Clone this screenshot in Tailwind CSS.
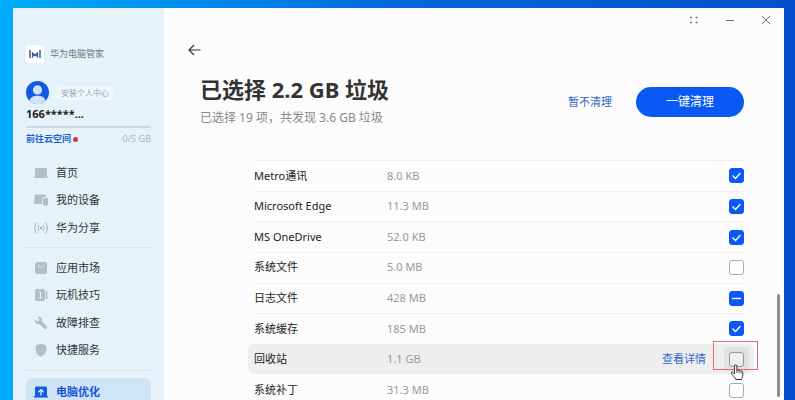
<!DOCTYPE html>
<html lang="zh-CN">
<head>
  <meta charset="UTF-8">
  <title>华为电脑管家</title>
  <script src="https://cdn.jsdelivr.net/npm/@tailwindcss/browser@4"></script>
</head>
<body class="h-screen overflow-hidden bg-linear-to-r from-[#00adfc] via-[#0668d8] to-[#0450cc] pt-2 pl-[13px] pr-[11px] font-['Noto_Sans','Noto_Sans_CJK_SC',sans-serif] text-[11px] text-[#333]">
  <div class="flex h-full overflow-hidden bg-[#fcfcfc]">

    <!-- Sidebar -->
    <aside class="flex w-[151px] shrink-0 flex-col bg-[#e5f2f9] px-[13px] pt-[37px]">
      <div class="flex h-[18px] shrink-0 items-center gap-[6px]">
        <svg class="size-[18px] rounded bg-white" viewBox="0 0 18 18" fill="none" stroke="#2d4a92" stroke-width="1.4">
          <path d="M4 5v8M14 5v8M6.6 12.6V8.4L9 10.6l2.4-2.2v4.2" />
        </svg>
        <span class="text-[9px] text-[#6c7984]">华为电脑管家</span>
      </div>

      <div class="mt-[18px] flex h-[23px] shrink-0 items-center gap-[6px]">
        <svg class="size-[23px]" viewBox="0 0 24 24">
          <clipPath id="avatar"><circle cx="12" cy="12" r="12" /></clipPath>
          <g clip-path="url(#avatar)">
            <rect width="24" height="24" fill="#1259e8" />
            <circle cx="12" cy="9.3" r="4.8" fill="#d3e2f8" />
            <path d="M3 24c0-6 3.500-8.500 9-8.500s9 2.500 9 8.500z" fill="#d3e2f8" />
          </g>
        </svg>
        <button class="h-[14px] rounded-full bg-[#eff6fa] px-[6px] text-[8px] leading-[14px] text-[#98a2aa]">安装个人中心</button>
      </div>
      <div class="mt-[2px] h-4 text-[11px] leading-4 font-bold text-[#222]">166*****...</div>
      <div class="mt-1 h-[2px] shrink-0 rounded-full bg-[#cbd7df]"></div>
      <div class="mt-[3px] flex h-4 shrink-0 items-center text-[9px]">
        <a href="#" class="font-bold text-[#1e5fd8]">前往云空间</a>
        <span class="ml-[2px] size-[5px] rounded-full bg-[#dc3038]"></span>
        <span class="ml-auto text-[#abb6be]">0/5 GB</span>
      </div>

      <nav class="flex flex-col">
        <div class="mt-3 grid h-[83px] grid-rows-3">
          <a href="#" class="flex items-center gap-2 pl-2">
            <svg class="size-[14px]" viewBox="0 0 14 14" fill="#b3bfc6">
              <rect x="1" y="2" width="12" height="9" rx="1.500" />
              <path d="M0 10.500h14v.8a.8.8 0 0 1-.8.8H.8a.8.8 0 0 1-.8-.8z" />
            </svg>
            首页
          </a>
          <a href="#" class="flex items-center gap-2 pl-2">
            <svg class="size-[14px]" viewBox="0 0 14 14" fill="#b3bfc6">
              <path d="M1.300 1.500h9.400A1.300 1.300 0 0 1 12 2.800V4H9.800A1.600 1.600 0 0 0 8.200 5.600V11H0V9.800h.4V2.500z" />
              <rect x="9" y="5" width="5" height="7.500" rx="1" />
            </svg>
            我的设备
          </a>
          <a href="#" class="flex items-center gap-2 pl-2">
            <svg class="size-[14px]" viewBox="0 0 14 14" fill="none" stroke="#a4b1b9" stroke-linecap="round">
              <circle cx="7" cy="7" r="1.200" fill="#a4b1b9" stroke="none" />
              <path d="M4.900 4.300a3.800 3.800 0 0 0 0 5.400M9.100 4.300a3.800 3.800 0 0 1 0 5.400M2.400 2.300a6.500 6.500 0 0 0 0 9.400M11.600 2.300a6.500 6.500 0 0 1 0 9.400" />
            </svg>
            华为分享
          </a>
        </div>
        <hr class="mt-[5px] border-[#d5e2ea]">
        <div class="mt-[6px] grid h-[110px] grid-rows-4">
          <a href="#" class="flex items-center gap-2 pl-2">
            <svg class="size-[14px]" viewBox="0 0 14 14">
              <rect x="1" y="1" width="12" height="12" rx="2.500" fill="#b3bfc6" />
              <path d="M4.200 4.200a2.900 2.900 0 0 0 5.600 0" fill="none" stroke="#e5f2f9" stroke-linecap="round" />
            </svg>
            应用市场
          </a>
          <a href="#" class="flex items-center gap-2 pl-2">
            <svg class="size-[14px]" viewBox="0 0 14 14" fill="#b3bfc6">
              <rect x="1" y="1" width="10" height="12" rx="2" />
              <path d="M11.800 2.500c1 .2 1.600.8 1.600 1.800v5.400c0 1-.6 1.600-1.600 1.800z" />
              <path d="M5 4h1.500v6M4.800 10h3.400" fill="none" stroke="#e5f2f9" />
            </svg>
            玩机技巧
          </a>
          <a href="#" class="flex items-center gap-2 pl-2">
            <svg class="size-[14px]" viewBox="0 0 14 14" fill="#b3bfc6">
              <path d="M3.200.9 5.300 3 4.900 4.900 3 5.300.9 3.200a3.700 3.700 0 0 0 4.700 4.800l4.600 4.600a1.650 1.650 0 0 0 2.400-2.400L8 5.600A3.700 3.700 0 0 0 3.200.9z" />
            </svg>
            故障排查
          </a>
          <a href="#" class="flex items-center gap-2 pl-2">
            <svg class="size-[14px]" viewBox="0 0 14 14" fill="#b3bfc6">
              <path d="M7 .5 12.300 2.400v4.300c0 3.300-2.200 5.500-5.300 6.900-3.100-1.400-5.300-3.600-5.300-6.900V2.400z" />
            </svg>
            快捷服务
          </a>
        </div>
        <hr class="mt-[6px] border-[#d5e2ea]">
        <a href="#" class="mt-[7px] flex h-7 items-center gap-2 rounded-md bg-[#d0e4f8] pl-2 font-bold text-[#1656dc]">
          <svg class="size-[14px]" viewBox="0 0 14 14">
            <rect x="1" y="1.500" width="12" height="10" rx="1.500" fill="#1259e8" />
            <path d="M0 11h14v1.500H0z" fill="#1259e8" />
            <path d="M7 10.500V5M4.300 7.300 7 4.600l2.700 2.700" fill="none" stroke="#e5f2f9" stroke-width="1.300" />
          </svg>
          电脑优化
        </a>
      </nav>
    </aside>

    <!-- Main panel -->
    <main class="relative min-w-0 flex-1">
      <div class="flex h-6 items-center justify-end gap-6 pr-3 text-[#777]">
        <button aria-label="菜单">
          <svg class="size-3" viewBox="0 0 12 12" fill="currentColor">
            <circle cx="3" cy="3.500" r="1" /><circle cx="8.500" cy="3.500" r="1" />
            <circle cx="3" cy="8.500" r="1" /><circle cx="8.500" cy="8.500" r="1" />
          </svg>
        </button>
        <button aria-label="最小化">
          <svg class="size-3" viewBox="0 0 12 12" stroke="currentColor"><path d="M2 6.500h8" /></svg>
        </button>
        <button aria-label="关闭">
          <svg class="size-3" viewBox="0 0 12 12" stroke="currentColor"><path d="m2 2 8 8M10 2l-8 8" /></svg>
        </button>
      </div>

      <div class="mt-3 flex h-3 pl-6">
        <button aria-label="返回">
          <svg class="h-3 w-[13px]" viewBox="0 0 13 12" fill="none" stroke="#333" stroke-width="1.200"><path d="M12.500 6H1M6 1 1 6l5 5" /></svg>
        </button>
      </div>

      <div class="mt-4 flex items-center justify-between pr-10 pl-9">
        <div class="h-[60px]">
          <h1 class="text-[22px] leading-[34px] font-bold">已选择 2.2 GB 垃圾</h1>
          <p class="text-[12px] leading-6 text-[#888]">已选择 19 项，共发现 3.6 GB 垃圾</p>
        </div>
        <div class="flex items-center gap-6">
          <button class="text-[11px] text-[#3868c4]">暂不清理</button>
          <button class="h-[30px] w-[108px] rounded-full bg-[#0a59f7] text-[12px] text-white">一键清理</button>
        </div>
      </div>

      <div class="mt-7 pr-[30px] pl-[84px]">
        <table class="h-[245px] w-full table-fixed border-separate border-spacing-0">
          <colgroup>
            <col class="w-[6px]">
            <col class="w-[133px]">
            <col class="w-[140px]">
            <col>
            <col class="w-[15px]">
            <col class="w-[10px]">
          </colgroup>
          <tbody>
            <tr>
              <td class="p-0"></td>
              <td class="border-t border-[#f0f0f0] p-0 text-[#222]"><label for="metro">Metro通讯</label></td>
              <td class="border-t border-[#f0f0f0] p-0 text-[#999]">8.0 KB</td>
              <td class="border-t border-[#f0f0f0] p-0"></td>
              <td class="border-t border-[#f0f0f0] p-0">
                <div class="grid size-[15px]">
                  <input id="metro" type="checkbox" checked class="peer col-start-1 row-start-1 size-[15px] appearance-none rounded-[3px] border border-[#aaa] bg-white checked:border-[#0a59f7] checked:bg-[#0a59f7]">
                  <svg class="pointer-events-none col-start-1 row-start-1 hidden size-[15px] peer-checked:block" viewBox="0 0 15 15" fill="none" stroke="#fff" stroke-width="1.300"><path d="m3.500 7.500 3 3 5-5.500" /></svg>
                </div>
              </td>
              <td class="p-0"></td>
            </tr>
            <tr>
              <td class="p-0"></td>
              <td class="border-t border-[#f0f0f0] p-0 text-[#222]"><label for="edge">Microsoft Edge</label></td>
              <td class="border-t border-[#f0f0f0] p-0 text-[#999]">11.3 MB</td>
              <td class="border-t border-[#f0f0f0] p-0"></td>
              <td class="border-t border-[#f0f0f0] p-0">
                <div class="grid size-[15px]">
                  <input id="edge" type="checkbox" checked class="peer col-start-1 row-start-1 size-[15px] appearance-none rounded-[3px] border border-[#aaa] bg-white checked:border-[#0a59f7] checked:bg-[#0a59f7]">
                  <svg class="pointer-events-none col-start-1 row-start-1 hidden size-[15px] peer-checked:block" viewBox="0 0 15 15" fill="none" stroke="#fff" stroke-width="1.300"><path d="m3.500 7.500 3 3 5-5.500" /></svg>
                </div>
              </td>
              <td class="p-0"></td>
            </tr>
            <tr>
              <td class="p-0"></td>
              <td class="border-t border-[#f0f0f0] p-0 text-[#222]"><label for="onedrive">MS OneDrive</label></td>
              <td class="border-t border-[#f0f0f0] p-0 text-[#999]">52.0 KB</td>
              <td class="border-t border-[#f0f0f0] p-0"></td>
              <td class="border-t border-[#f0f0f0] p-0">
                <div class="grid size-[15px]">
                  <input id="onedrive" type="checkbox" checked class="peer col-start-1 row-start-1 size-[15px] appearance-none rounded-[3px] border border-[#aaa] bg-white checked:border-[#0a59f7] checked:bg-[#0a59f7]">
                  <svg class="pointer-events-none col-start-1 row-start-1 hidden size-[15px] peer-checked:block" viewBox="0 0 15 15" fill="none" stroke="#fff" stroke-width="1.300"><path d="m3.500 7.500 3 3 5-5.500" /></svg>
                </div>
              </td>
              <td class="p-0"></td>
            </tr>
            <tr>
              <td class="p-0"></td>
              <td class="border-t border-[#f0f0f0] p-0 text-[#222]"><label for="sysfile">系统文件</label></td>
              <td class="border-t border-[#f0f0f0] p-0 text-[#999]">5.0 MB</td>
              <td class="border-t border-[#f0f0f0] p-0"></td>
              <td class="border-t border-[#f0f0f0] p-0">
                <div class="grid size-[15px]">
                  <input id="sysfile" type="checkbox" class="peer col-start-1 row-start-1 size-[15px] appearance-none rounded-[3px] border border-[#aaa] bg-white checked:border-[#0a59f7] checked:bg-[#0a59f7]">
                  <svg class="pointer-events-none col-start-1 row-start-1 hidden size-[15px] peer-checked:block" viewBox="0 0 15 15" fill="none" stroke="#fff" stroke-width="1.300"><path d="m3.500 7.500 3 3 5-5.500" /></svg>
                </div>
              </td>
              <td class="p-0"></td>
            </tr>
            <tr>
              <td class="p-0"></td>
              <td class="border-t border-[#f0f0f0] p-0 text-[#222]"><label for="logs">日志文件</label></td>
              <td class="border-t border-[#f0f0f0] p-0 text-[#999]">428 MB</td>
              <td class="border-t border-[#f0f0f0] p-0"></td>
              <td class="border-t border-[#f0f0f0] p-0">
                <div class="grid size-[15px]">
                  <input id="logs" type="checkbox" class="peer col-start-1 row-start-1 size-[15px] appearance-none rounded-[3px] border border-[#aaa] bg-white indeterminate:border-[#0a59f7] indeterminate:bg-[#0a59f7]">
                  <svg class="pointer-events-none col-start-1 row-start-1 hidden size-[15px] peer-indeterminate:block" viewBox="0 0 15 15" stroke="#fff" stroke-width="1.400"><path d="M3 7.500h9" /></svg>
                </div>
              </td>
              <td class="p-0"></td>
            </tr>
            <tr>
              <td class="p-0"></td>
              <td class="border-t border-[#f0f0f0] p-0 text-[#222]"><label for="cache">系统缓存</label></td>
              <td class="border-t border-[#f0f0f0] p-0 text-[#999]">185 MB</td>
              <td class="border-t border-[#f0f0f0] p-0"></td>
              <td class="border-t border-[#f0f0f0] p-0">
                <div class="grid size-[15px]">
                  <input id="cache" type="checkbox" checked class="peer col-start-1 row-start-1 size-[15px] appearance-none rounded-[3px] border border-[#aaa] bg-white checked:border-[#0a59f7] checked:bg-[#0a59f7]">
                  <svg class="pointer-events-none col-start-1 row-start-1 hidden size-[15px] peer-checked:block" viewBox="0 0 15 15" fill="none" stroke="#fff" stroke-width="1.300"><path d="m3.500 7.500 3 3 5-5.500" /></svg>
                </div>
              </td>
              <td class="p-0"></td>
            </tr>
            <!-- hovered row -->
            <tr>
              <td class="rounded-l-md bg-[#eeeeee] p-0"></td>
              <td class="border-t border-[#eeeeee] bg-[#eeeeee] p-0 text-[#222]"><label for="recycle">回收站</label></td>
              <td class="border-t border-[#eeeeee] bg-[#eeeeee] p-0 text-[#999]">1.1 GB</td>
              <td class="border-t border-[#eeeeee] bg-[#eeeeee] p-0 pr-[23px] text-right"><a href="#" class="text-[#2f66cc]">查看详情</a></td>
              <td class="border-t border-[#eeeeee] bg-[#eeeeee] p-0">
                <div class="relative size-[15px]">
                  <div class="absolute -inset-[5px] rounded bg-[#e2e2e2]"></div>
                  <input id="recycle" type="checkbox" class="relative block size-[15px] appearance-none rounded-[3px] border border-[#999] bg-[#eee]">
                  <!-- callout and hand pointer -->
                  <div class="absolute -top-[11px] -left-4 z-10 h-[29px] w-[45px] border border-[#e06c6c]"></div>
                  <svg class="absolute top-[12px] left-px z-10 h-4 w-[14px]" viewBox="0 0 14 16" fill="#fff" stroke="#333" stroke-linejoin="round">
                    <path d="M4.500 10V2a1.200 1.200 0 0 1 2.400 0v4.500c.3-.9 2-.8 2.100.3.500-.7 1.900-.5 2 .6.600-.5 1.800-.3 1.800.9v2.500c0 2.500-1 3.200-1.300 4.700H5.800c-.4-1.700-2.500-3.400-4.300-5.800-.8-1.100.6-2.200 1.600-1.200z" />
                    <path d="M6.900 6.500V9M9 7v2.300M11 7.700v1.800" fill="none" stroke-width=".8" />
                  </svg>
                </div>
              </td>
              <td class="rounded-r-md bg-[#eeeeee] p-0"></td>
            </tr>
            <tr>
              <td class="p-0"></td>
              <td class="border-t border-transparent p-0 text-[#222]"><label for="patch">系统补丁</label></td>
              <td class="border-t border-transparent p-0 text-[#999]">31.3 MB</td>
              <td class="border-t border-transparent p-0"></td>
              <td class="border-t border-transparent p-0">
                <div class="grid size-[15px]">
                  <input id="patch" type="checkbox" class="peer col-start-1 row-start-1 size-[15px] appearance-none rounded-[3px] border border-[#aaa] bg-white checked:border-[#0a59f7] checked:bg-[#0a59f7]">
                  <svg class="pointer-events-none col-start-1 row-start-1 hidden size-[15px] peer-checked:block" viewBox="0 0 15 15" fill="none" stroke="#fff" stroke-width="1.300"><path d="m3.500 7.500 3 3 5-5.500" /></svg>
                </div>
              </td>
              <td class="p-0"></td>
            </tr>
          </tbody>
        </table>
      </div>

      <!-- Scrollbar thumb -->
      <div class="absolute right-1 bottom-[3px] h-[103px] w-[3px] rounded-full bg-[#8c8c8c]"></div>
    </main>
  </div>

  <script>
    // Only part of the log files is selected
    document.getElementById('logs').indeterminate = true;
  </script>
</body>
</html>
